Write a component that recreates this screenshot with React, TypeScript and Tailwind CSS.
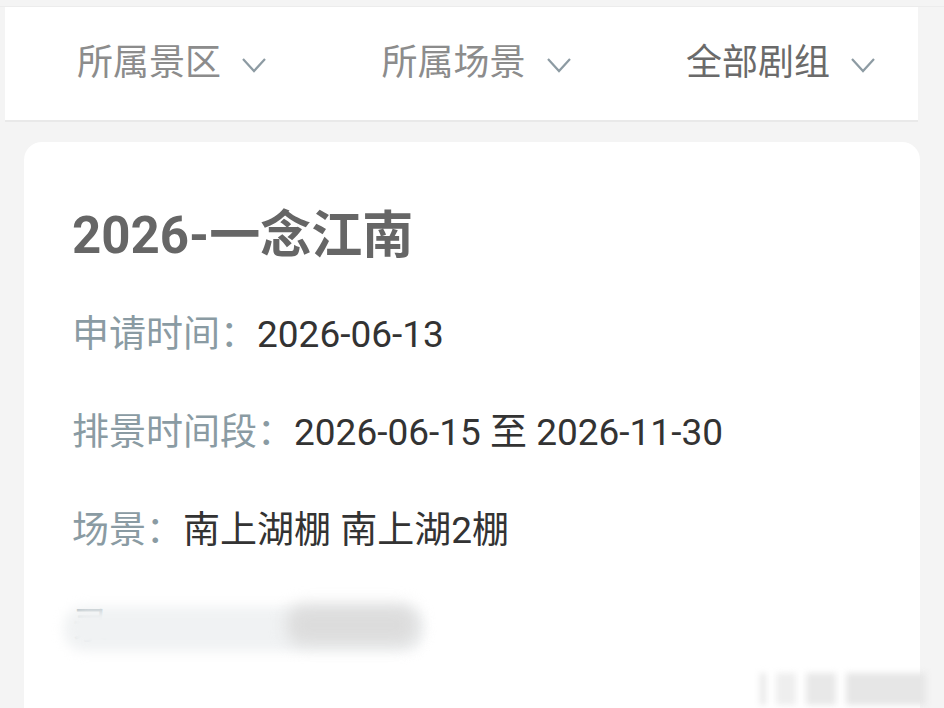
import { ReactNode } from "react";

const font = { fontFamily: "Roboto, 'Noto Sans CJK SC', sans-serif" };

function Chevron() {
  return (
    <svg width="26" height="18" viewBox="0 0 26 18" fill="none" className="ml-5 mt-1">
      <path d="M2 3 L13 15 L24 3" stroke="#8d9ba3" strokeWidth="2.2" />
    </svg>
  );
}

function Filter({ label, dark = false }: { label: string; dark?: boolean }) {
  return (
    <div className="flex items-center">
      <span className={dark ? "text-[36px] text-[#6a6a6a]" : "text-[36px] text-[#8c8c8c]"}>{label}</span>
      <Chevron />
    </div>
  );
}

function Row({ label, children }: { label: string; children: ReactNode }) {
  return (
    <div className="flex h-[98px] items-center text-[37px] leading-none">
      <span className="text-[#8a9ba3]">{label}</span>
      <span className="text-[#333333]">{children}</span>
    </div>
  );
}

export default function App() {
  return (
    <div className="h-[708px] w-[944px] overflow-hidden bg-[#f4f4f4]" style={font}>
      <div className="h-[7px] border-b border-[#ececec]" />
      <header className="ml-[5px] mr-[26px] flex h-[115px] items-center justify-between border-b-2 border-[#e9e9e9] bg-white pl-[72px] pr-[42px] pb-[2px]">
        <Filter label="所属景区" />
        <Filter label="所属场景" />
        <Filter label="全部剧组" dark />
      </header>
      <main className="ml-[24px] mr-[24px] mt-[20px] h-[700px] rounded-[18px] bg-white pl-[48px] pt-[68px]">
        <h1 className="text-[51px] font-bold leading-none text-[#666666]">2026-一念江南</h1>
        <div className="mt-[24px]">
          <Row label="申请时间：">2026-06-13</Row>
          <Row label="排景时间段：">2026-06-15 至 2026-11-30</Row>
          <Row label="场景：">南上湖棚 南上湖2棚</Row>
          <div className="relative flex h-[94px] items-center text-[37px] leading-none">
            <span className="text-[#8a9ba3]">录</span>
            <div className="absolute left-[-8px] top-[28px] h-[44px] w-[360px] rounded-[20px] bg-[#f0f2f3] blur-[6px]" />
            <div className="absolute left-[215px] top-[26px] h-[40px] w-[130px] rounded-[16px] bg-[#dcdcdc] blur-[8px]" />
          </div>
        </div>
        <div className="flex justify-end pr-[0px]">
          <div className="mr-[-10px] flex h-[32px] w-[170px] gap-[10px] blur-[3px]">
            <div className="h-full w-[6px] bg-[#e8e8e8]" />
            <div className="h-full w-[20px] bg-[#eeeeee]" />
            <div className="h-full w-[30px] bg-[#e8e8e8]" />
            <div className="h-full w-[80px] bg-[#e6e6e6]" />
          </div>
        </div>
      </main>
    </div>
  );
}
